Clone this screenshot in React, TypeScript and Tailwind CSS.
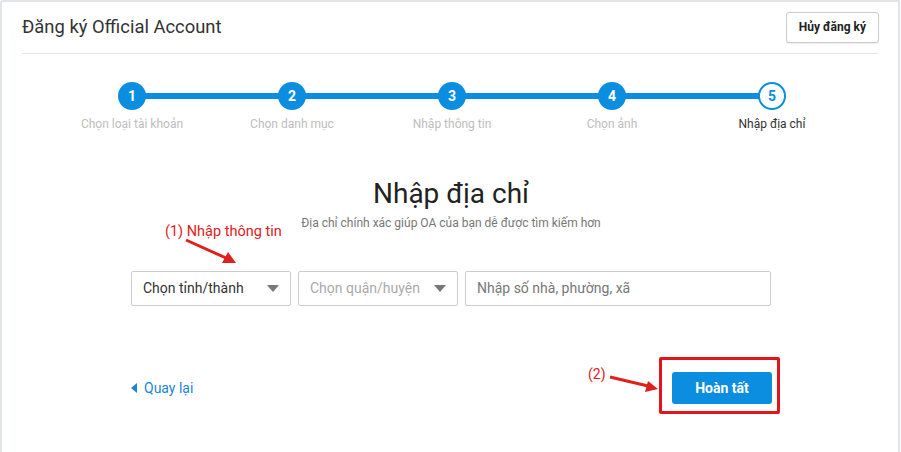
import React from 'react'

const steps = ['Chọn loại tài khoản', 'Chọn danh mục', 'Nhập thông tin', 'Chọn ảnh', 'Nhập địa chỉ']

function Caret({ className }: { className?: string }) {
  return (
    <svg width="12" height="7" viewBox="0 0 12 7" className={className}>
      <path d="M0 0h12L6 7z" fill="#777" />
    </svg>
  )
}

function Stepper() {
  return (
    <div className="relative mx-auto mt-7 grid w-[800px] translate-x-[2px] grid-cols-5">
      <div className="absolute left-[80px] right-[80px] top-[11px] h-[6px] bg-[#0b8ee0]" />
      {steps.map((label, i) => {
        const current = i === steps.length - 1
        return (
          <div key={label} className="relative flex flex-col items-center">
            {current ? (
              <div className="flex h-7 w-7 items-center justify-center rounded-full border-2 border-[#0b8ee0] bg-white text-[14px] font-bold text-[#0b8ee0]">
                {i + 1}
              </div>
            ) : (
              <div className="flex h-7 w-7 items-center justify-center rounded-full bg-[#0b8ee0] text-[14px] font-bold text-white">
                {i + 1}
              </div>
            )}
            <span className={`mt-[6px] text-[12px] leading-4 ${current ? 'text-[#333]' : 'text-[#bdbdbd]'}`}>
              {label}
            </span>
          </div>
        )
      })}
    </div>
  )
}

export default function App() {
  return (
    <div className="relative h-[452px] w-[901px] overflow-hidden bg-white font-['Roboto','Liberation_Sans',sans-serif]">
      <div className="h-[460px] w-[900px] rounded-tl-[3px] border-x-2 border-t-2 border-[#e1e4e8] bg-white">
        <header className="mx-5 flex h-[52px] items-center justify-between border-b border-[#e5e5e5] pb-[1px]">
          <h1 className="text-[18.4px] text-[#333]">Đăng ký Official Account</h1>
          <button className="mr-[-1px] h-[31px] rounded-[3px] border border-[#ccc] bg-white px-3 text-[12px] font-bold text-[#222] shadow-[0_1px_1px_rgba(0,0,0,0.08)]">
            Hủy đăng ký
          </button>
        </header>

        <Stepper />

        <section className="mx-auto mt-[46px] w-[640px] translate-x-[1px]">
          <h2 className="text-center text-[28px] leading-8 text-[#222]">Nhập địa chỉ</h2>
          <p className="mt-[4px] text-center text-[12px] text-[#777]">
            Địa chỉ chính xác giúp OA của bạn dễ được tìm kiếm hơn
          </p>

          <div className="mt-[39px] flex gap-[7px]">
            <div className="flex h-[35px] w-[160px] items-center justify-between rounded-[2px] border border-[#ccc] px-[11px] text-[14px] text-[#333]">
              <span>Chọn tỉnh/thành</span>
              <Caret />
            </div>
            <div className="flex h-[35px] w-[160px] items-center justify-between rounded-[2px] border border-[#ccc] px-[11px] text-[14px] text-[#aaa]">
              <span>Chọn quận/huyện</span>
              <Caret />
            </div>
            <div className="flex h-[35px] flex-1 items-center rounded-[2px] border border-[#ccc] px-[11px] text-[14px] text-[#777]">
              Nhập số nhà, phường, xã
            </div>
          </div>

          <div className="mt-[66px] flex items-center justify-between">
            <a className="flex items-center gap-[7px] text-[14px] text-[#1a85d6]">
              <svg width="6" height="10" viewBox="0 0 6 10">
                <path d="M6 0v10L0 5z" fill="#1a85d6" />
              </svg>
              Quay lại
            </a>
            <button className="mr-[-1px] h-[32px] w-[100px] rounded-[3px] bg-[#0b8ee0] text-[14px] font-bold text-white">
              Hoàn tất
            </button>
          </div>
        </section>
      </div>

      {/* annotations */}
      <span className="absolute left-[165px] top-[222px] text-[14.5px] leading-5 text-[#e0201c]">(1) Nhập thông tin</span>
      <span className="absolute left-[588px] top-[364px] text-[14px] leading-5 text-[#e0201c]">(2)</span>
      <div className="absolute left-[659px] top-[357px] h-[57px] w-[121px] rounded-[2px] border-[3px] border-[#e3141b]" />
      <svg className="absolute left-0 top-0" width="901" height="452">
        <line x1="186" y1="240" x2="226" y2="258" stroke="#e0201c" strokeWidth="3" />
        <path d="M236 263 L222 263 L228 252 Z" fill="#e0201c" />
        <line x1="610" y1="377" x2="648" y2="386" stroke="#e0201c" strokeWidth="3" />
        <path d="M658 389 L645 392 L648 381 Z" fill="#e0201c" />
      </svg>
    </div>
  )
}
